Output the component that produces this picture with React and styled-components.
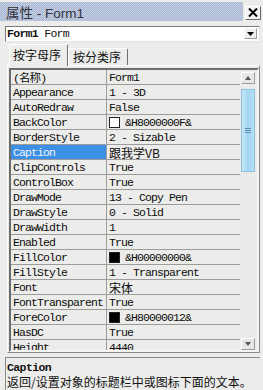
import React from "react";
import styled, { createGlobalStyle } from "styled-components";

const Global = createGlobalStyle`
  html, body { margin: 0; padding: 0; }
  body { background: #ecedeb; overflow: hidden; }
  * { box-sizing: border-box; }
`;

const MONO = `"Liberation Mono", "Noto Sans CJK SC", monospace`;
const CJK = `"Noto Sans CJK SC", sans-serif`;

const Window = styled.div`
  width: 263px;
  height: 390px;
  background: #ecedeb;
  display: flex;
  flex-direction: column;
  overflow: hidden;
`;

const TitleRow = styled.div`
  margin-top: 2px;
  height: 19px;
  display: flex;
  align-items: stretch;
`;

const TitleBar = styled.div`
  flex: 0 0 243px;
  background: repeating-conic-gradient(#aab8d4 0 25%, #c4cee3 0 50%) 0 0 / 2px 2px;
  display: flex;
  align-items: center;
  padding-left: 6px;
  font-family: "Liberation Sans", ${CJK};
  font-size: 13.5px;
  color: #33333d;
`;

const CloseArea = styled.div`
  flex: 1;
  display: flex;
  align-items: center;
  padding-left: 2px;
`;

const CloseButton = styled.div`
  width: 16px;
  height: 14px;
  margin-top: 2px;
  background: #f2f2f2;
  border: 1px solid;
  border-color: #ffffff #6a6a6a #6a6a6a #ffffff;
  display: flex;
  align-items: center;
  justify-content: center;
`;

const ObjectBox = styled.div`
  margin: 5px 3px 0 5px;
  height: 16px;
  background: #ffffff;
  border: 1px solid;
  border-color: #7c7c7c #e4e4e4 #e4e4e4 #7c7c7c;
  display: flex;
  align-items: center;
  padding-left: 1px;
  font-family: ${MONO};
  font-size: 11.5px;
  letter-spacing: -0.7px;
  color: #111;
  white-space: pre;
`;

const Bold = styled.b`
  font-weight: 700;
`;

const ComboText = styled.div`
  flex: 1;
`;

const ComboButton = styled.div`
  width: 13px;
  height: 11px;
  margin-right: 2px;
  background: #eeeeee;
  border: 1px solid;
  border-color: #fafafa #9a9a9a #9a9a9a #fafafa;
  display: flex;
  align-items: center;
  justify-content: center;
`;

const TabRow = styled.div`
  margin-top: 2px;
  height: 22px;
  display: flex;
  align-items: flex-end;
  padding-left: 9px;
  position: relative;
  z-index: 1;
`;

const Tab = styled.div`
  height: ${p => (p.$active ? 22 : 17)}px;
  width: ${p => (p.$active ? 59 : 60)}px;
  margin-bottom: ${p => (p.$active ? -1 : 0)}px;
  background: #ecedeb;
  border-top: 1px solid #ffffff;
  border-left: 1px solid #ffffff;
  border-right: 1px solid #707070;
  border-radius: 2px 2px 0 0;
  font-family: ${CJK};
  font-size: 12px;
  line-height: 1;
  color: #111;
  display: flex;
  align-items: ${p => (p.$active ? "center" : "flex-end")};
  padding-left: ${p => (p.$active ? 3 : 4)}px;
  padding-bottom: ${p => (p.$active ? 1 : 2)}px;
`;

const TabPage = styled.div`
  margin: 0 3px 0 7px;
  height: 289px;
  border: 1px solid;
  border-color: #ffffff #8a8a8a #8a8a8a #ffffff;
  padding: 2px 0 0 1px;
`;

const Grid = styled.div`
  height: 284px;
  border: 2px solid;
  border-color: #6c6c6c #f4f4f4 #f4f4f4 #6c6c6c;
  box-shadow: inset 1px 1px 0 #a0a0a0;
  background: #ecedeb;
  display: flex;
  overflow: hidden;
`;

const Rows = styled.div`
  flex: 1;
  overflow: hidden;
`;

const Row = styled.div`
  height: 15px;
  display: flex;
  border-bottom: 1px solid #9c9c9c;
  background: #ecedeb;
`;

const NameCell = styled.div`
  flex: 0 0 96px;
  border-right: 1px solid #9c9c9c;
  padding-left: 2px;
  display: flex;
  align-items: center;
  font-family: ${MONO};
  font-size: 11.5px;
  letter-spacing: -0.9px;
  color: ${p => (p.$sel ? "#eef5ff" : "#0c0c0c")};
  background: ${p => (p.$sel ? "#3d8fe3" : "transparent")};
  white-space: pre;
`;

const ValueCell = styled.div`
  flex: 1;
  padding-left: 2px;
  display: flex;
  align-items: center;
  gap: 5px;
  font-family: ${p => (p.$cjk ? CJK : MONO)};
  font-size: ${p => (p.$cjk ? 12 : 11.5)}px;
  letter-spacing: ${p => (p.$cjk ? 0 : -0.9)}px;
  color: #0c0c0c;
  white-space: pre;
  overflow: hidden;
`;

const Swatch = styled.span`
  width: 11px;
  height: 11px;
  border: 1px solid #222;
  background: ${p => p.$color};
  flex: 0 0 auto;
`;

const ScrollBar = styled.div`
  flex: 0 0 17px;
  padding: 2px 2px 0 1px;
  display: flex;
  flex-direction: column;
  background: #ecedeb;
`;

const ScrollButton = styled.div`
  height: 12px;
  background: #e6e6e6;
  border: 1px solid;
  border-color: #ffffff #9c9c9c #9c9c9c #ffffff;
  display: flex;
  align-items: center;
  justify-content: center;
`;

const Track = styled.div`
  flex: 1;
  margin: 3px 0;
  background: #e9eaea;
  display: flex;
  flex-direction: column;
`;

const Thumb = styled.div`
  height: 83px;
  margin-top: 2px;
  background: linear-gradient(90deg, #c8e8f8, #a4d6f2 50%, #b6def4);
  border: 1px solid #8cc0e0;
  display: flex;
  align-items: center;
  justify-content: center;
`;

const Desc = styled.div`
  margin: 4px 3px 0 5px;
  flex: 1;
  border-top: 1px solid #8a8a8a;
  border-left: 1px solid #8a8a8a;
  padding: 1px 0 0 1px;
  color: #111;
`;

const DescTitle = styled.div`
  font-family: ${MONO};
  font-weight: 700;
  font-size: 11.5px;
  letter-spacing: -0.6px;
  line-height: 12px;
  margin-top: 3px;
`;

const DescText = styled.div`
  font-family: ${CJK};
  font-size: 12px;
  line-height: 16px;
  white-space: nowrap;
`;

const rows = [
  ["(名称)", "Form1"],
  ["Appearance", "1 - 3D"],
  ["AutoRedraw", "False"],
  ["BackColor", "&H8000000F&", "#ffffff"],
  ["BorderStyle", "2 - Sizable"],
  ["Caption", "跟我学VB", null, true],
  ["ClipControls", "True"],
  ["ControlBox", "True"],
  ["DrawMode", "13 - Copy Pen"],
  ["DrawStyle", "0 - Solid"],
  ["DrawWidth", "1"],
  ["Enabled", "True"],
  ["FillColor", "&H00000000&", "#000000"],
  ["FillStyle", "1 - Transparent"],
  ["Font", "宋体"],
  ["FontTransparent", "True"],
  ["ForeColor", "&H80000012&", "#000000"],
  ["HasDC", "True"],
  ["Height", "4440"],
];

const isCjk = s => /[\u4e00-\u9fff]/.test(s);

export default function App() {
  return (
    <Window>
      <Global />
      <TitleRow>
        <TitleBar>属性 - Form1</TitleBar>
        <CloseArea>
          <CloseButton>
            <svg width="10" height="9" viewBox="0 0 10 9">
              <path d="M1 0.5 L9 8.5 M9 0.5 L1 8.5" stroke="#000" strokeWidth="2" />
            </svg>
          </CloseButton>
        </CloseArea>
      </TitleRow>
      <ObjectBox>
        <ComboText>
          <Bold>Form1</Bold> Form
        </ComboText>
        <ComboButton>
          <svg width="7" height="4" viewBox="0 0 7 4">
            <path d="M0 0 H7 L3.5 4 Z" fill="#000" />
          </svg>
        </ComboButton>
      </ObjectBox>
      <TabRow>
        <Tab $active>按字母序</Tab>
        <Tab>按分类序</Tab>
      </TabRow>
      <TabPage>
        <Grid>
          <Rows>
            {rows.map(([name, value, swatch, sel]) => (
              <Row key={name}>
                <NameCell $sel={sel}>{name}</NameCell>
                <ValueCell $cjk={isCjk(value)}>
                  {swatch && <Swatch $color={swatch} />}
                  {value}
                </ValueCell>
              </Row>
            ))}
          </Rows>
          <ScrollBar>
            <ScrollButton>
              <svg width="6" height="4" viewBox="0 0 6 4">
                <path d="M0 4 H6 L3 0 Z" fill="#555" />
              </svg>
            </ScrollButton>
            <Track>
              <Thumb>
                <svg width="6" height="6" viewBox="0 0 6 6">
                  <path d="M0 0.5 H6 M0 2.5 H6 M0 4.5 H6" stroke="#5a8fb0" strokeWidth="1" />
                </svg>
              </Thumb>
            </Track>
            <ScrollButton>
              <svg width="6" height="4" viewBox="0 0 6 4">
                <path d="M0 0 H6 L3 4 Z" fill="#555" />
              </svg>
            </ScrollButton>
          </ScrollBar>
        </Grid>
      </TabPage>
      <Desc>
        <DescTitle>Caption</DescTitle>
        <DescText>返回/设置对象的标题栏中或图标下面的文本。</DescText>
      </Desc>
    </Window>
  );
}
